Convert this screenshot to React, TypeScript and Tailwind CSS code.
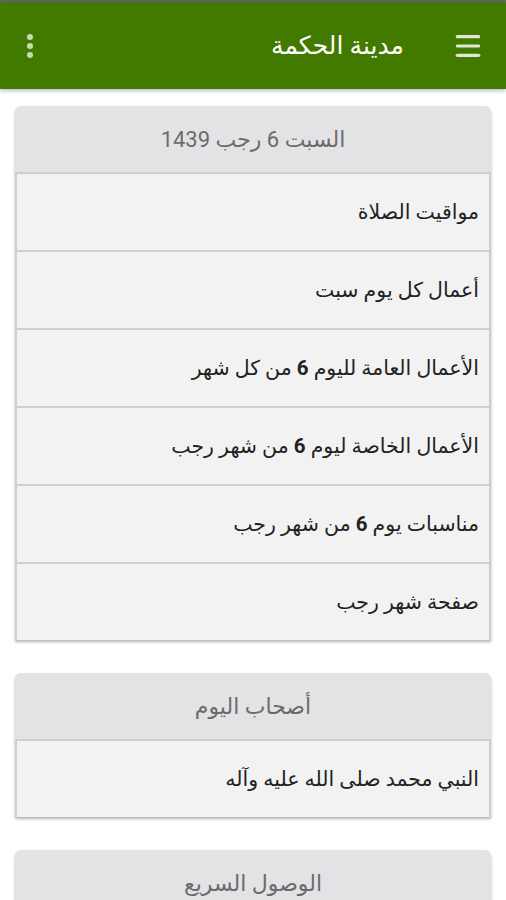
import { Menu } from "lucide-react"

const todayItems = [
  "مواقيت الصلاة",
  "أعمال كل يوم سبت",
  "الأعمال العامة لليوم 6 من كل شهر",
  "الأعمال الخاصة ليوم 6 من شهر رجب",
  "مناسبات يوم 6 من شهر رجب",
  "صفحة شهر رجب",
]

// the day number is shown bold inside the row text
function RowText({ text }: { text: string }) {
  const parts = text.split(" 6 ")
  if (parts.length < 2) return <>{text}</>
  return (
    <>
      {parts[0]} <b className="font-bold">6</b> {parts[1]}
    </>
  )
}

function Card({ title, items }: { title: string; items: string[] }) {
  return (
    <div className="mx-[15px] rounded-t-[6px] bg-[#f2f2f2] shadow-[0_2px_3px_rgba(0,0,0,0.3)]">
      <div className="h-[66px] flex items-center justify-center rounded-t-[6px] bg-[#e3e3e6] text-[22px] text-[#6b6b6b]">
        {title}
      </div>
      {items.map((it) => (
        <div
          key={it}
          className="h-[78px] flex items-center pr-[10px] pl-[12px] border-t-2 border-[#cfcfcf] border-l-2 border-r-2 text-[20.5px] text-[#222]"
        >
          <span><RowText text={it} /></span>
        </div>
      ))}
    </div>
  )
}

export default function App() {
  return (
    <div dir="rtl" className="h-[900px] overflow-hidden bg-white font-['Roboto','DejaVu_Sans',sans-serif]">
      <div className="h-[3px] bg-[#5a6a50]" />
      <div className="h-[86px] bg-[#427a00] flex items-center px-[22px] shadow-[0_2px_4px_rgba(0,0,0,0.25)]">
        <Menu className="w-[32px] h-[32px] text-[#dfe9d2]" strokeWidth={2.4} />
        <div className="mr-[48px] text-[25px] text-white">مدينة الحكمة</div>
        <div className="mr-auto ml-[5px] flex flex-col gap-[3px]">
          <span className="w-[6px] h-[6px] rounded-full bg-[#c5dcb0]" />
          <span className="w-[6px] h-[6px] rounded-full bg-[#c5dcb0]" />
          <span className="w-[6px] h-[6px] rounded-full bg-[#c5dcb0]" />
        </div>
      </div>
      <div className="pt-[17px] flex flex-col gap-[33px]">
        <Card title="السبت 6 رجب 1439" items={todayItems} />
        <Card title="أصحاب اليوم" items={["النبي محمد صلى الله عليه وآله"]} />
        <Card title="الوصول السريع" items={[]} />
      </div>
    </div>
  )
}
